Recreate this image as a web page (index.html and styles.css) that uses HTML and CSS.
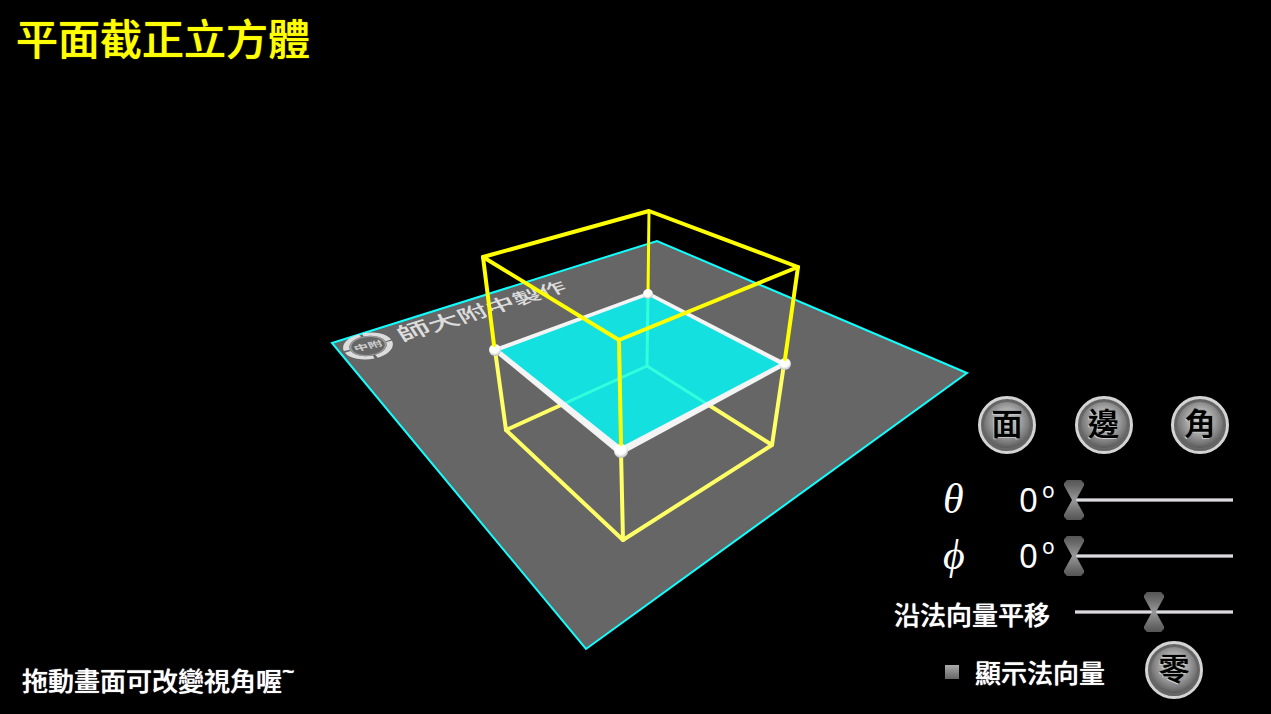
FILE: index.html
```html
<!DOCTYPE html>
<html lang="zh-Hant">
<head>
<meta charset="utf-8">
<meta name="viewport" content="width=device-width, initial-scale=1">
<title>平面截正立方體</title>
<link rel="stylesheet" href="styles.css">
</head>
<body>
<main class="stage">
  <svg class="scene" viewBox="0 0 1271 714" role="img" aria-label="平面截正立方體">
    <defs>
      <radialGradient id="ball" cx="45%" cy="35%" r="65%">
        <stop offset="0.6" stop-color="#fff"/>
        <stop offset="1" stop-color="#bbb"/>
      </radialGradient>
      <clipPath id="cut"><path d="M495 350 648 294 784 364 621 451z"/></clipPath>
    </defs>
    <path class="ground" d="M332 343 657 241 967 373 586 649z"/>

    <!-- school badge and maker's name lying on the ground plane -->
    <g transform="matrix(1 -0.22 0.28 0.52 368 346)">
      <circle class="badge-ring" r="21"/>
      <circle class="badge-line" r="17"/>
      <text class="badge-text" x="0" y="5" text-anchor="middle">中附</text>
    </g>
    <text class="maker" transform="matrix(1 -0.31 0.36 0.56 402 342)"><tspan font-size="31">師</tspan><tspan font-size="29">大</tspan><tspan font-size="28">附</tspan><tspan font-size="27">中</tspan><tspan font-size="26">製</tspan><tspan font-size="25">作</tspan></text>

    <g class="edge lower">
      <path d="M506 430 647 366 772 445 623 540z"/>
      <path d="M495 350 506 430M648 294 647 366M784 364 772 445M621 451 623 540"/>
    </g>
    <path class="section-fill" d="M495 350 648 294 784 364 621 451z"/>
    <path class="edge behind" clip-path="url(#cut)" d="M506 430 647 366 772 445M648 294 647 366"/>
    <path class="edge upper far" d="M649 211 648 294"/>
    <g class="section-edge">
      <path d="M495 348 648 292 650 295 496 352z"/>
      <path d="M649 292 785 362 783 366 647 295z"/>
      <path d="M493 351 497 348 624 449 618 454z"/>
      <path d="M619 448 783 362 785 366 623 454z"/>
    </g>
    <g fill="url(#ball)">
      <circle cx="648" cy="294" r="5"/>
      <circle cx="495" cy="350" r="6"/>
      <circle cx="785" cy="364" r="6"/>
      <circle cx="621" cy="451" r="7"/>
    </g>
    <path class="edge upper" d="M483 257 494 345M798 267 785 359M619 340 621 444"/>
    <path class="edge upper" d="M483 257 649 211 798 267 619 340z"/>
  </svg>

  <h1 class="title">平面截正立方體</h1>
  <p class="hint">拖動畫面可改變視角喔<span class="tilde">~</span></p>

  <form class="panel">
    <div class="presets">
      <button class="knob" type="button">面</button>
      <button class="knob" type="button">邊</button>
      <button class="knob" type="button">角</button>
    </div>
    <div class="row">
      <label class="angle" for="theta"><i class="greek">θ</i></label>
      <output class="degrees" for="theta">0<sup>o</sup></output>
      <input class="slider" id="theta" type="range" min="0" max="180" value="0">
    </div>
    <div class="row">
      <label class="angle" for="phi"><i class="greek">ϕ</i></label>
      <output class="degrees" for="phi">0<sup>o</sup></output>
      <input class="slider" id="phi" type="range" min="0" max="360" value="0">
    </div>
    <div class="row">
      <label class="caption" for="shift">沿法向量平移</label>
      <input class="slider" id="shift" type="range" min="-50" max="50" value="0">
    </div>
    <div class="options">
      <input class="tick" id="normal" type="checkbox">
      <label class="caption" for="normal">顯示法向量</label>
      <button class="knob reset" type="button">零</button>
    </div>
  </form>
</main>
</body>
</html>
```
FILE: styles.css
```css
* {
  box-sizing: border-box;
}

body {
  margin: 0;
  background: #000;
  color: #fff;
  font-family: "Noto Sans CJK TC", sans-serif;
}

.stage {
  position: relative;
  display: grid;
  grid-template-columns: 1fr auto;
  grid-template-rows: auto 1fr;
  min-height: 100vh;
  overflow: hidden;
}

/* The 3D view fills the stage; title and controls lie over it. */
.scene {
  position: absolute;
  inset: 0;
  width: 100%;
  height: 100%;
}

.title,
.hint,
.panel {
  z-index: 1;
}

.title {
  grid-column: 1 / -1;
  margin: 5px 16px 0;
  color: #ff0;
  font-size: 42px;
  font-weight: 500;
  line-height: 64px;
  text-shadow: 0 0 1px #ff0;
}

.hint {
  align-self: end;
  margin: 0 0 14px 22px;
  font-size: 26px;
  font-weight: 500;
  line-height: 40px;
  text-shadow: 0 0 1px #fff;
}

.tilde {
  font: 600 22px/1 "Noto Sans", sans-serif;
  vertical-align: 12px;
}

.panel {
  align-self: end;
  width: 350px;
  margin: 0 27px 15px 0;
}

.presets {
  display: flex;
  justify-content: space-between;
  padding: 0 15px 0 84px;
  margin-bottom: 18px;
}

.knob {
  width: 58px;
  height: 58px;
  padding: 0 0 6px;
  border: 3px solid #d4d4d4;
  border-radius: 50%;
  background: radial-gradient(circle 28px at 50% 42%, #ccc 0, #aaa 45%, #777 80%, #555 100%);
  box-shadow: inset 0 0 0 3px #666;
  color: #000;
  font: 500 31px/46px "Noto Sans CJK TC", sans-serif;
  text-align: center;
  text-shadow: 0 0 1px #000, -1px 1px 0 #ddd;
  cursor: pointer;
}

.row {
  display: flex;
  align-items: center;
  height: 56px;
}

.angle {
  width: 76px;
  padding: 4px 0 0 49px;
  line-height: 40px;
}

.greek {
  font: italic 42px/40px "Liberation Serif", "DejaVu Serif", serif;
}

.degrees {
  width: 94px;
  padding-left: 49px;
  font: 400 33px/40px "DejaVu Sans", sans-serif;
  font-family: "Noto Sans", sans-serif;
  white-space: nowrap;
}

.degrees sup {
  margin-left: 4px;
  font-size: 21px;
  line-height: 1;
  vertical-align: 14px;
}

.slider {
  appearance: none;
  flex: none;
  width: 180px;
  height: 40px;
  margin: 0;
  background: linear-gradient(#8d8b90 0 1px, #dcdadd 1px 3px, #8d8b90 3px) center / 158px 4px no-repeat;
  cursor: pointer;
}

.slider::-webkit-slider-thumb {
  appearance: none;
  width: 20px;
  height: 40px;
  border: 0;
  background: linear-gradient(#555, #666 15%, #999 50%, #666 85%, #555);
  clip-path: polygon(15% 0, 85% 0, 100% 8%, 100% 14%, 60% 50%, 100% 86%, 100% 92%, 85% 100%, 15% 100%, 0 92%, 0 86%, 40% 50%, 0 14%, 0 8%);
}

.caption {
  flex: none;
  width: 170px;
  padding-top: 4px;
  font-size: 26px;
  font-weight: 500;
  line-height: 40px;
  text-shadow: 0 0 1px #fff;
}

.options {
  display: flex;
  align-items: center;
  margin-top: 1px;
  padding-left: 51px;
}

.tick {
  appearance: none;
  width: 14px;
  height: 14px;
  margin: 4px 16px 0 0;
  background: linear-gradient(#aaa, #666);
}

.ground {
  fill: #666;
  stroke: #1ff;
  stroke-width: 2;
}

.badge-ring {
  fill: none;
  stroke: #ddd;
  stroke-width: 6;
  stroke-dasharray: 30 3;
}

.badge-line {
  fill: none;
  stroke: #999;
  stroke-width: 2;
}

.badge-text {
  fill: #ccc;
  font-size: 14px;
  font-weight: 700;
}

.maker {
  fill: #ddd;
  font-weight: 500;
}

.edge {
  fill: none;
  stroke-width: 4;
  stroke-linejoin: round;
  stroke-linecap: round;
}

.lower {
  stroke: #ff6;
}

.upper {
  stroke: #ff0;
}

.far,
.behind {
  stroke-width: 3;
}

.behind {
  stroke: #3fd;
}

.section-fill {
  fill: #14e0e0;
}

.section-edge {
  fill: #f4f4f4;
}
```
